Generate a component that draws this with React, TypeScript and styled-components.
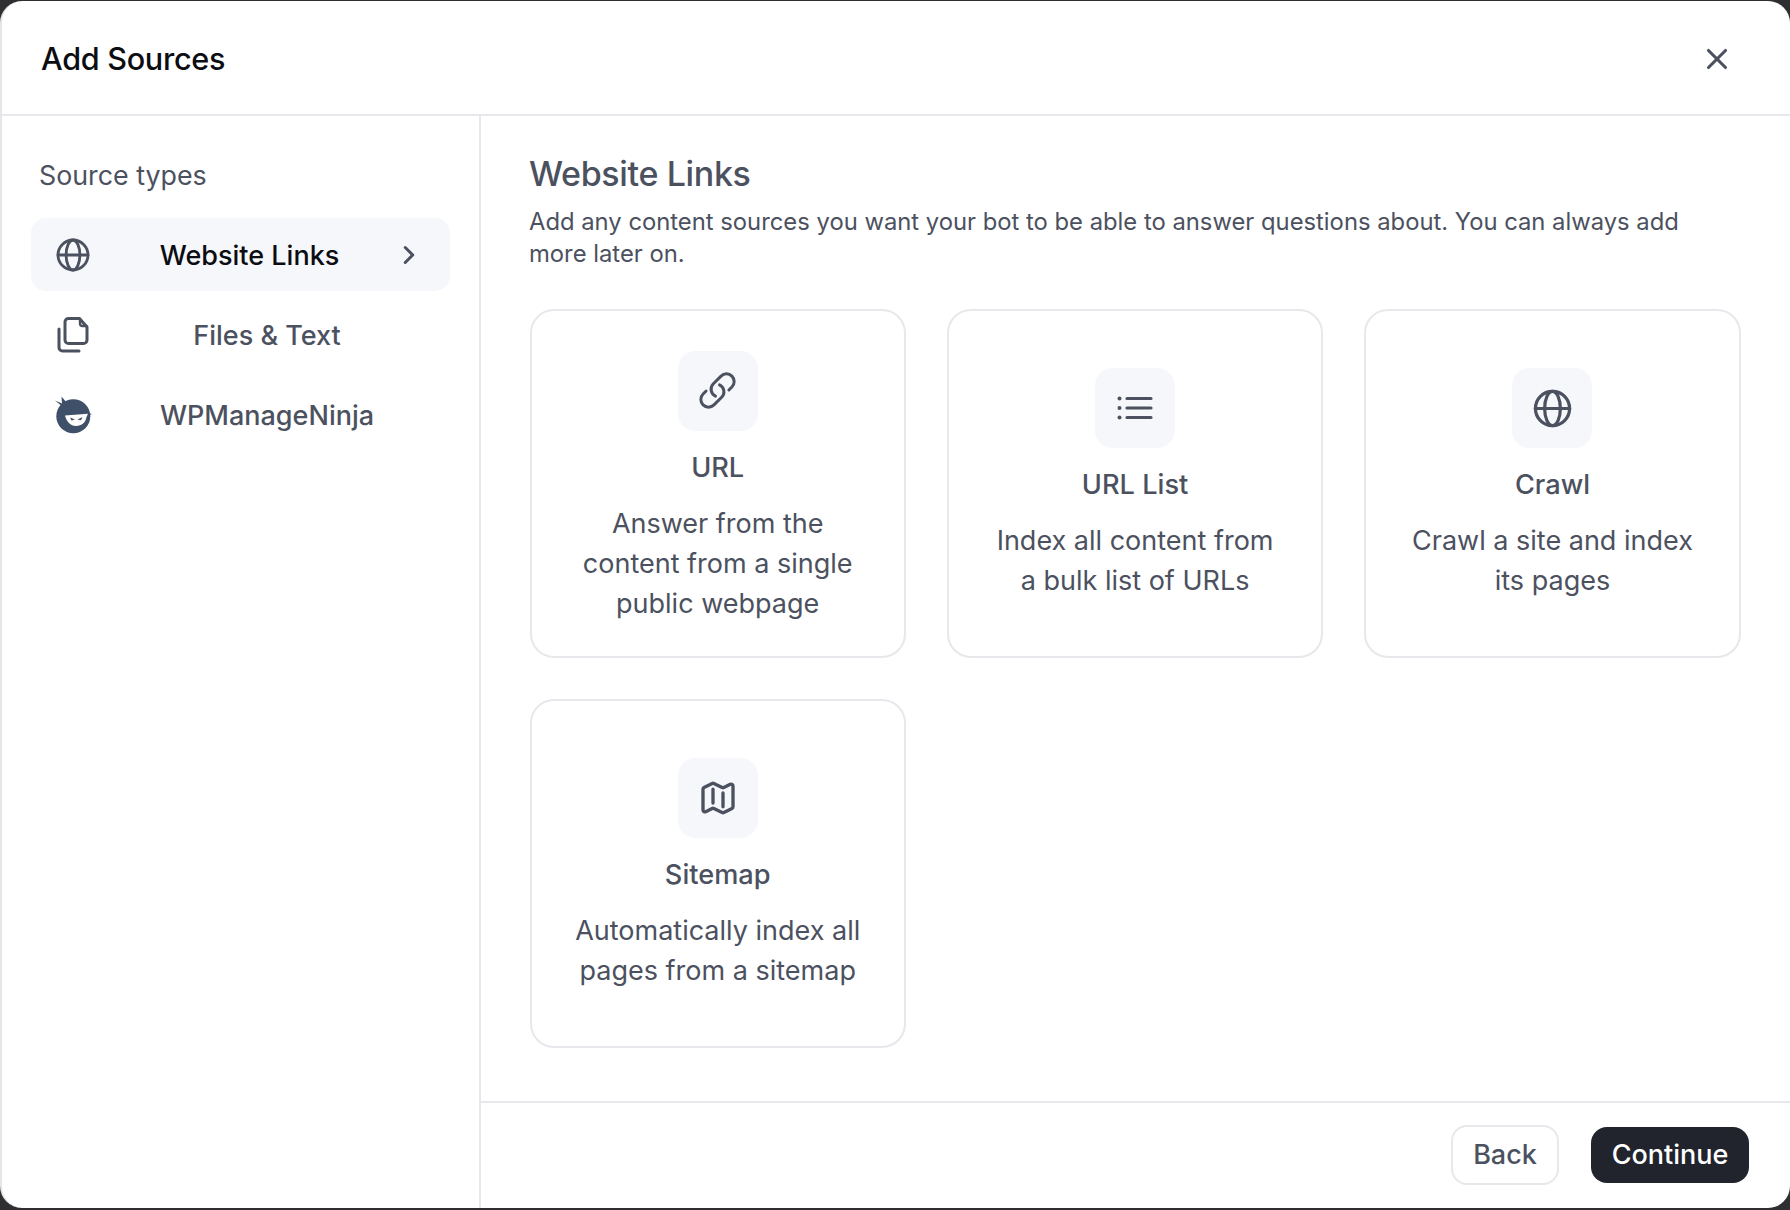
import React from "react";
import styled, { createGlobalStyle } from "styled-components";
import { X } from "lucide-react";

const Global = createGlobalStyle`
  html, body { margin: 0; padding: 0; background: #2f2f31; }
  * { box-sizing: border-box; }
`;

const Modal = styled.div`
  width: 1790px;
  height: 1207px;
  margin-top: 1px;
  background: #fff;
  border-radius: 22px;
  border-left: 2px solid #e5e6e9;
  display: flex;
  flex-direction: column;
  overflow: hidden;
  font-family: Inter, "Liberation Sans", sans-serif;
  color: #4c5160;
`;

const Header = styled.header`
  height: 115px;
  flex: none;
  display: flex;
  align-items: center;
  justify-content: space-between;
  padding: 2px 56px 0 39px;
  border-bottom: 2px solid #e7e8eb;
`;

const Title = styled.h1`
  margin: 0;
  font-size: 30.6px;
  font-weight: 500;
  letter-spacing: -0.3px;
  color: #0b0d12;
`;

const Close = styled.button`
  border: 0;
  padding: 0;
  background: none;
  display: flex;
  color: #4c5160;
`;

const Body = styled.div`
  flex: 1;
  min-height: 0;
  display: flex;
`;

const Sidebar = styled.aside`
  width: 479px;
  flex: none;
  padding: 41px 29px 0;
  border-right: 2px solid #e7e8eb;
`;

const SideTitle = styled.div`
  font-size: 26.8px;
  line-height: 36px;
  padding-left: 8px;
  margin-bottom: 25px;
`;

const SideItem = styled.div<{ $active?: boolean }>`
  height: 73px;
  margin-bottom: 7px;
  display: flex;
  align-items: center;
  padding: 0 26px 0 24px;
  border-radius: 15px;
  font-size: 27px;
  font-weight: 500;
  background: ${(p) => (p.$active ? "#f6f7fb" : "transparent")};
  color: ${(p) => (p.$active ? "#0b0d12" : "#4c5160")};
`;

const SideIcon = styled.span`
  width: 36px;
  flex: none;
  display: flex;
  justify-content: center;
  color: #4c5160;

  svg {
    flex: none;
  }
`;

const SideLabel = styled.span`
  flex: 1;
  text-align: center;
  padding: 2px 0 0 19px;
`;

const Chevron = styled.span`
  display: flex;
  margin-left: 5px;
  color: #4c5160;
`;

const Main = styled.main`
  flex: 1;
  min-width: 0;
  display: flex;
  flex-direction: column;
`;

const Content = styled.div`
  flex: 1;
  padding: 36px 48px 0 48px;
`;

const Heading = styled.h2`
  margin: 0 0 10px;
  font-size: 34px;
  line-height: 44px;
  font-weight: 500;
  letter-spacing: -0.35px;
`;

const Desc = styled.p`
  margin: 0 0 39px;
  font-size: 23.8px;
  line-height: 32px;
`;

const Grid = styled.div`
  display: grid;
  margin-left: 0.5px;
  grid-template-columns: repeat(3, 376.4px);
  grid-auto-rows: 349px;
  gap: 41px;
`;

const Card = styled.div<{ $tall?: boolean }>`
  border: 2px solid #e7e8eb;
  border-radius: 24px;
  display: flex;
  flex-direction: column;
  align-items: center;
  justify-content: center;
  text-align: center;
  padding: ${(p) => (p.$tall ? "7px" : "2px")} 30px 0;
`;

const Tile = styled.div`
  width: 80px;
  height: 80px;
  border-radius: 18px;
  background: #f6f7fb;
  display: flex;
  align-items: center;
  justify-content: center;
  margin-bottom: 21px;
`;

const CardTitle = styled.div`
  font-size: 27.2px;
  line-height: 32px;
  font-weight: 500;
  margin-bottom: 20px;
`;

const CardText = styled.div`
  font-size: 27px;
  line-height: 40px;
`;

const Footer = styled.footer`
  height: 107px;
  flex: none;
  border-top: 2px solid #e7e8eb;
  display: flex;
  align-items: center;
  justify-content: flex-end;
  gap: 32px;
  padding: 0 41px 2px 0;
`;

const BackButton = styled.button`
  width: 108px;
  height: 60px;
  border: 2px solid #e7e8eb;
  border-radius: 16px;
  background: #fff;
  color: #4c5160;
  font: 500 27px Inter, "Liberation Sans", sans-serif;
`;

const ContinueButton = styled.button`
  width: 158px;
  height: 56px;
  border: 0;
  border-radius: 16px;
  background: #21242d;
  color: #fff;
  font: 500 27px Inter, "Liberation Sans", sans-serif;
`;

const Stroke = ({ size, sw = 1.8, children }: { size: number; sw?: number; children: React.ReactNode }) => (
  <svg width={size} height={size} viewBox="0 0 24 24" fill="none" stroke="currentColor" strokeWidth={sw} strokeLinecap="round" strokeLinejoin="round">
    {children}
  </svg>
);

const GlobeIcon = ({ size = 36 }: { size?: number }) => (
  <Stroke size={size} sw={1.9}>
    <circle cx="12" cy="12" r="10" />
    <ellipse cx="12" cy="12" rx="4.600" ry="10" />
    <path d="M2 12H22" />
  </Stroke>
);

const LinkIcon = () => (
  <Stroke size={41} sw={1.75}>
    <path d="M13.19 8.688a4.5 4.5 0 0 1 1.242 7.244l-4.5 4.5a4.5 4.5 0 0 1-6.364-6.364l1.757-1.757m13.35-.622 1.757-1.757a4.5 4.5 0 0 0-6.364-6.364l-4.5 4.5a4.5 4.5 0 0 0 1.242 7.244" />
  </Stroke>
);

const ListIcon = () => (
  <svg width="36" height="28" viewBox="0 0 36 28" fill="none" stroke="currentColor" strokeWidth="3.2" strokeLinecap="round">
    <path d="M10 4.500H34M10 14H34M10 23.500H34" />
    <g fill="currentColor" stroke="none">
      <circle cx="2.500" cy="4.500" r="2" />
      <circle cx="2.500" cy="14" r="2" />
      <circle cx="2.500" cy="23.500" r="2" />
    </g>
  </svg>
);

const MapIcon = () => (
  <Stroke size={40} sw={2}>
    <path d="M9 6.750V15m6-6v8.250m.503 3.498 4.875-2.437c.381-.19.622-.58.622-1.006V4.820c0-.836-.88-1.380-1.628-1.006l-3.869 1.934c-.317.159-.69.159-1.006 0L9.503 3.252a1.125 1.125 0 0 0-1.006 0L3.622 5.689C3.240 5.880 3 6.270 3 6.695V19.180c0 .836.88 1.380 1.628 1.006l3.869-1.934c.317-.159.69-.159 1.006 0l4.994 2.497c.317.158.69.158 1.006 0Z" />
  </Stroke>
);

const ChevronIcon = () => (
  <Stroke size={30} sw={2.4}>
    <path d="m9 18 6-6-6-6" />
  </Stroke>
);

const FilesIcon = () => (
  <svg width="32" height="37" viewBox="0 0 32 37" fill="none" stroke="currentColor" strokeWidth="3" strokeLinecap="round" strokeLinejoin="round">
    <path d="M8 24V6a3.500 3.500 0 0 1 3.500-3.500H22.500L30 11v13a3.500 3.500 0 0 1-3.500 3.500H11.500A3.500 3.500 0 0 1 8 24Z" />
    <path d="M23 3V7.500a2.500 2.500 0 0 0 2.500 2.500h4" strokeWidth="2.400" />
    <path d="M2 13v18.500A3.500 3.500 0 0 0 5.500 35H22" />
  </svg>
);

const NinjaIcon = () => (
  <svg width="38" height="40" viewBox="-1 -2 38 40">
    <path d="M0 3.500 7 6.500 6.500 -.5 12 6 8 10Z" fill="#3f5069" />
    <circle cx="18.300" cy="19.300" r="17" fill="#3f5069" />
    <path d="M24 14 37 17 30 20Z" fill="#3f5069" />
    <path d="M10 18.500 33 16.800 31.500 20C30.500 25.500 27 29 21 29 15.500 29 11.500 24.500 10 18.500Z" fill="#fff" />
    <path d="M15 20.500 20 22.500 16.500 23.500ZM27.500 20 22.500 22.500 26 23.200Z" fill="#3f5069" />
  </svg>
);

const cards = [
  { title: "URL", tall: true, text: ["Answer from the", "content from a single", "public webpage"], icon: <LinkIcon /> },
  { title: "URL List", text: ["Index all content from", "a bulk list of URLs"], icon: <ListIcon /> },
  { title: "Crawl", text: ["Crawl a site and index", "its pages"], icon: <GlobeIcon size={41} /> },
  { title: "Sitemap", text: ["Automatically index all", "pages from a sitemap"], icon: <MapIcon /> },
];

export default function App() {
  return (
    <>
      <Global />
      <Modal>
        <Header>
          <Title>Add Sources</Title>
          <Close aria-label="Close"><X size={34} strokeWidth={2.2} /></Close>
        </Header>
        <Body>
          <Sidebar>
            <SideTitle>Source types</SideTitle>
            <SideItem $active>
              <SideIcon><GlobeIcon /></SideIcon>
              <SideLabel>Website Links</SideLabel>
              <Chevron><ChevronIcon /></Chevron>
            </SideItem>
            <SideItem>
              <SideIcon><FilesIcon /></SideIcon>
              <SideLabel>Files &amp; Text</SideLabel>
            </SideItem>
            <SideItem>
              <SideIcon><NinjaIcon /></SideIcon>
              <SideLabel>WPManageNinja</SideLabel>
            </SideItem>
          </Sidebar>
          <Main>
            <Content>
              <Heading>Website Links</Heading>
              <Desc>Add any content sources you want your bot to be able to answer questions about. You can always add more later on.</Desc>
              <Grid>
                {cards.map((c) => (
                  <Card key={c.title} $tall={c.tall}>
                    <Tile>{c.icon}</Tile>
                    <CardTitle>{c.title}</CardTitle>
                    <CardText>{c.text.map((t) => <div key={t}>{t}</div>)}</CardText>
                  </Card>
                ))}
              </Grid>
            </Content>
            <Footer>
              <BackButton>Back</BackButton>
              <ContinueButton>Continue</ContinueButton>
            </Footer>
          </Main>
        </Body>
      </Modal>
    </>
  );
}
